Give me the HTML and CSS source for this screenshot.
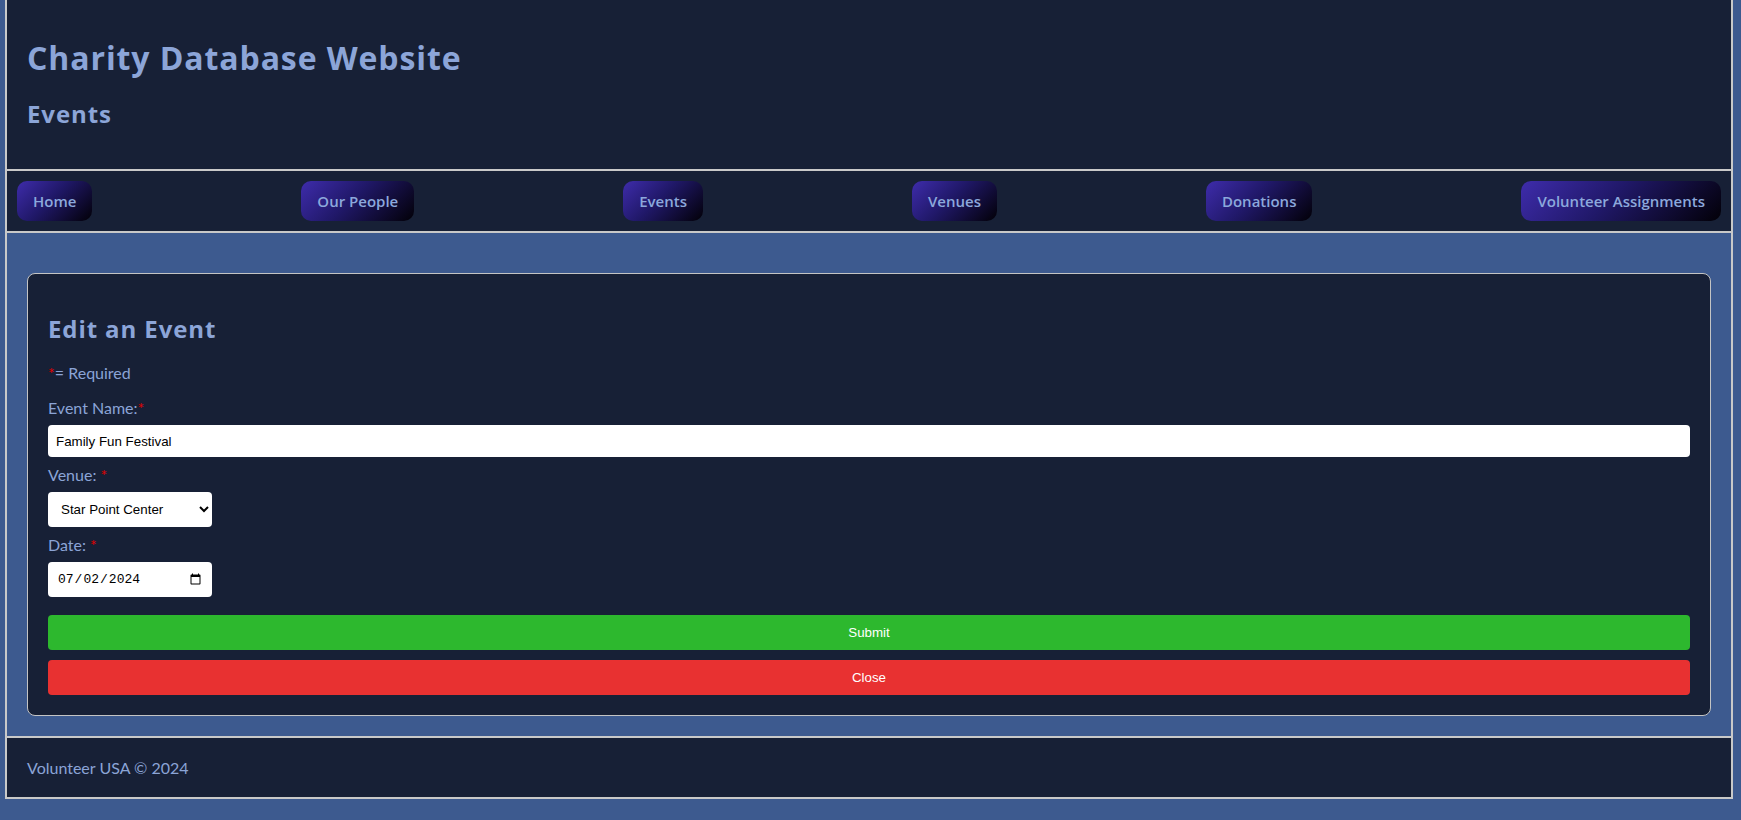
FILE: index.html
```html
<!DOCTYPE html>
<html lang="en">
<head>
<meta charset="utf-8">
<title>Charity Database Website - Events</title>
<link rel="stylesheet" href="styles.css">
</head>
<body>
<div class="page">
  <header class="site-header">
    <h1 class="site-title">Charity Database Website</h1>
    <h2 class="page-title">Events</h2>
  </header>
  <nav class="site-nav">
    <a class="nav-btn" href="#">Home</a>
    <a class="nav-btn" href="#">Our People</a>
    <a class="nav-btn" href="#">Events</a>
    <a class="nav-btn" href="#">Venues</a>
    <a class="nav-btn" href="#">Donations</a>
    <a class="nav-btn" href="#">Volunteer Assignments</a>
  </nav>
  <main class="site-main">
    <section class="card">
      <h2 class="card-title">Edit an Event</h2>
      <p class="req-note"><span class="req">*</span>= Required</p>
      <form class="form">
        <label class="field-label" for="ename">Event Name:<span class="req">*</span></label>
        <input class="text-input" id="ename" type="text" value="Family Fun Festival">
        <label class="field-label" for="venue">Venue: <span class="req">*</span></label>
        <select class="select-input" id="venue">
          <option selected>Star Point Center</option>
        </select>
        <label class="field-label" for="edate">Date: <span class="req">*</span></label>
        <input class="date-input" id="edate" type="date" value="2024-07-02">
        <button class="btn btn-submit" type="button">Submit</button>
        <button class="btn btn-close" type="button">Close</button>
      </form>
    </section>
  </main>
  <footer class="site-footer">
    <p class="footer-text">Volunteer USA © 2024</p>
  </footer>
</div>
</body>
</html>
```

FILE: styles.css
```css
* { box-sizing: border-box; }

html, body {
  margin: 0;
  padding: 0;
  background: #3d5a8f;
}

body {
  font-family: "Lato", "Liberation Sans", sans-serif;
  color: #8ba4d6;
  padding: 0 8px 20px 5px;
}

.page {
  border-left: 2px solid #c9c9c9;
  border-right: 2px solid #c9c9c9;
  border-bottom: 2px solid #c9c9c9;
}

.site-header {
  background: #172036;
  padding: 36px 20px 39px;
  border-bottom: 2px solid #c9c9c9;
}

.site-title {
  font-family: "Open Sans", "Liberation Sans", sans-serif;
  font-weight: 700;
  font-size: 32px;
  letter-spacing: 0.9px;
  color: #8ca5d8;
  margin: 0 0 18px;
}

.page-title {
  font-family: "Open Sans", "Liberation Sans", sans-serif;
  font-weight: 700;
  font-size: 24px;
  letter-spacing: 0.9px;
  color: #8ca5d8;
  margin: 0;
}

.site-nav {
  background: #172036;
  padding: 10px;
  display: flex;
  justify-content: space-between;
  align-items: center;
  border-bottom: 2px solid #c9c9c9;
}

.nav-btn {
  display: flex;
  align-items: center;
  height: 40px;
  padding: 0 16px;
  border-radius: 10px;
  background: linear-gradient(135deg, #3e2cab 0%, #201868 45%, #020007 100%);
  color: #8ca8dc;
  font-family: "Open Sans", "Noto Sans", sans-serif;
  font-weight: 600;
  font-size: 15px;
  text-decoration: none;
}

.site-main {
  background: #3d5a8f;
  padding: 40px 20px 20px;
  border-bottom: 2px solid #c9c9c9;
}

.card {
  background: #172036;
  border: 1px solid #c4c4c4;
  border-radius: 8px;
  padding: 20px;
}

.card-title {
  font-family: "Open Sans", "Liberation Sans", sans-serif;
  font-weight: 700;
  font-size: 24px;
  letter-spacing: 0.9px;
  color: #8ca5d8;
  margin: 18px 0 18px;
}

.req-note {
  font-size: 16px;
  margin: 0 0 16px;
}

.req { color: #e00000; }

.form {
  display: flex;
  flex-direction: column;
  align-items: flex-start;
}

.field-label {
  display: block;
  font-size: 16px;
  margin-bottom: 8px;
}

.text-input,
.select-input,
.date-input {
  font-family: "Liberation Sans", Arial, sans-serif;
  font-size: 13.33px;
  color: #000;
  background: #fff;
  border: none;
  border-radius: 4px;
  margin: 0 0 8px;
}

.text-input {
  width: 100%;
  height: 32px;
  padding: 0 8px;
}

.select-input {
  width: 164px;
  height: 35px;
  padding: 0 6px 0 9px;
}

.date-input {
  width: 164px;
  height: 35px;
  padding: 0 8px 0 9px;
  font-family: "Liberation Mono", "DejaVu Sans Mono", monospace;
  font-size: 13px;
}

.btn {
  width: 100%;
  height: 35px;
  border: none;
  border-radius: 4px;
  color: #fff;
  font-family: "Liberation Sans", Arial, sans-serif;
  font-size: 13.33px;
  margin-top: 10px;
}

.btn-submit { background: #2db82e; }
.btn-close { background: #e83131; }

.site-footer {
  background: #172036;
  padding: 20px;
}

.footer-text {
  margin: 0;
  font-size: 16px;
}
```
